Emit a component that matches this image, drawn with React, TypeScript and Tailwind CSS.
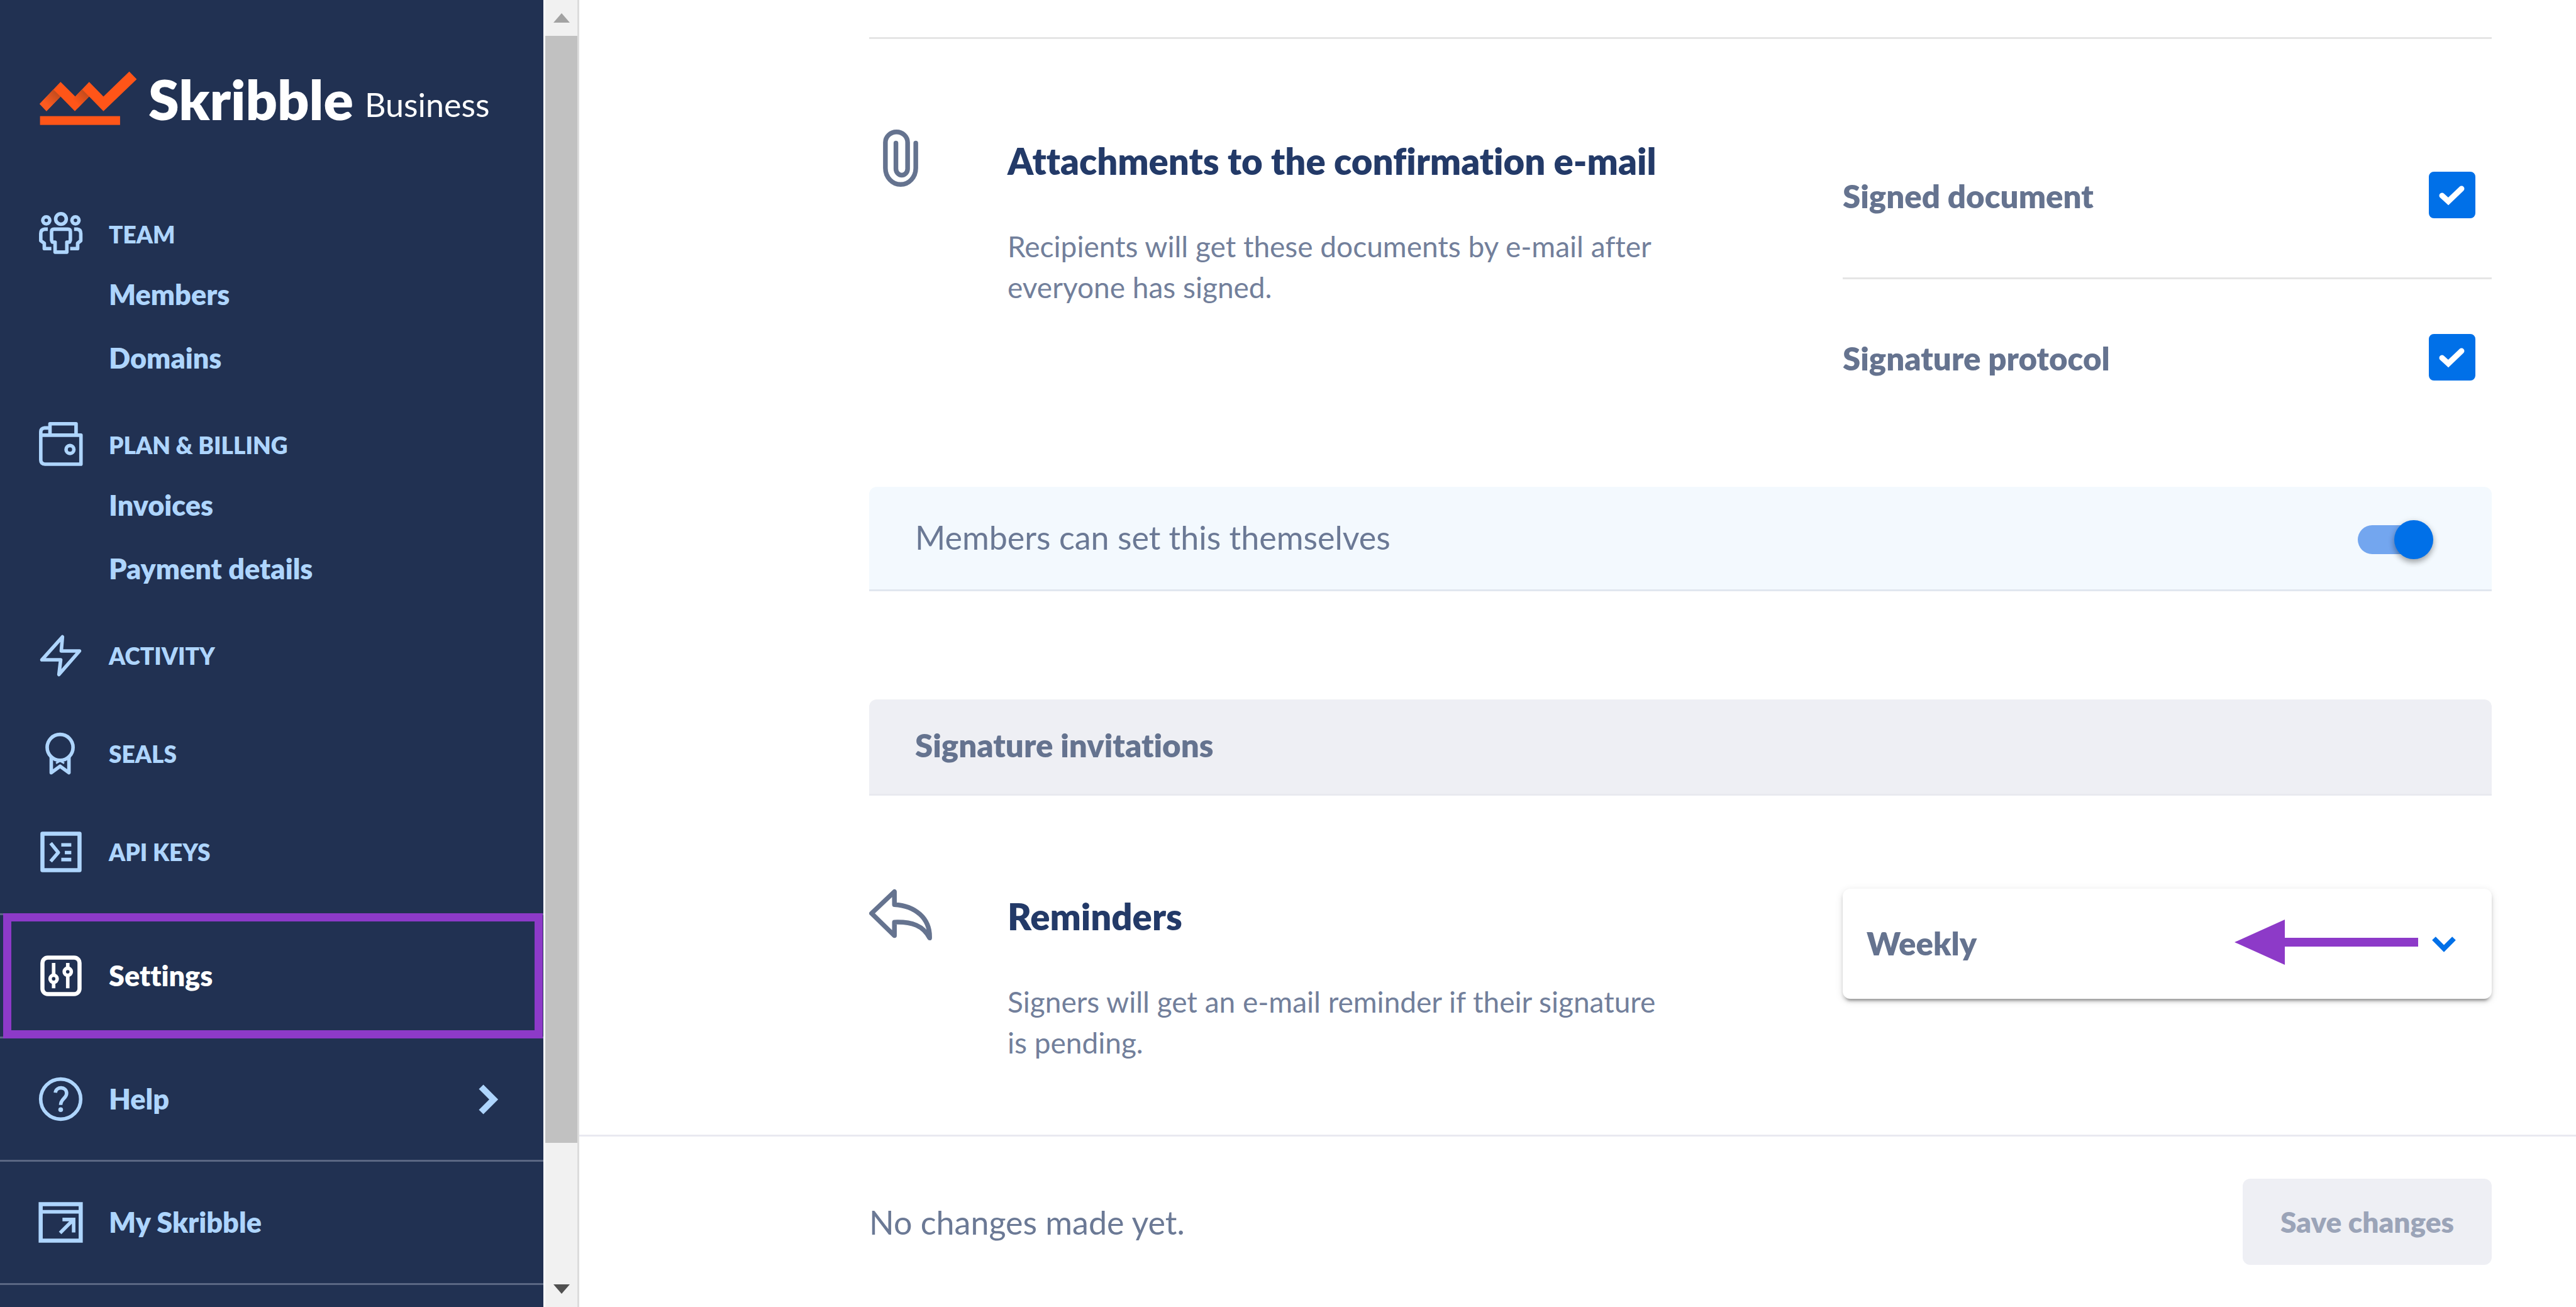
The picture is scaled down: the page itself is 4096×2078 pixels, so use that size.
import React, { useState } from 'react';

type IconProps = { children: React.ReactNode };

function NavIcon({ children }: IconProps) {
  return (
    <svg
      viewBox="0 0 78 78"
      className="size-[73px] shrink-0"
      fill="none"
      stroke="currentColor"
      strokeWidth="6"
      strokeLinejoin="round"
      aria-hidden="true"
    >
      {children}
    </svg>
  );
}

function TeamIcon() {
  return (
    <NavIcon>
      <g transform="translate(2.5 1) scale(0.333) translate(-50 -38)" strokeWidth="18">
        <circle cx="86" cy="81" r="18" />
        <circle cx="161" cy="74" r="27" />
        <circle cx="235" cy="81" r="18" />
        <path d="M125 126H197Q209 126 209 138V182L205 192H191V243H131V192H117L113 182V138Q113 126 125 126Z" />
        <path d="M94 126H78Q58 128 58 148V185L76 198V225H112" />
        <path d="M228 126H244Q262 128 262 148V185L246 198V225H208" />
      </g>
    </NavIcon>
  );
}

function WalletIcon() {
  return (
    <NavIcon>
      <g transform="translate(2.5 0) scale(0.333) translate(-50 -58)" strokeWidth="18">
        <path d="M58 125H263V273H80Q58 271 58 251V108Q58 90 78 88H105" />
        <path d="M105 125V67H238V125" />
        <circle cx="207" cy="198" r="20" />
      </g>
    </NavIcon>
  );
}

function ActivityIcon() {
  return (
    <NavIcon>
      <path d="M42 7L40 31H71L36 71L39 46H7Z" />
    </NavIcon>
  );
}

function SealIcon() {
  return (
    <NavIcon>
      <circle cx="38" cy="28" r="22" />
      <path d="M23 44V71L38 60L53 71V44" />
      <path d="M31 55L38 51L45 55" strokeWidth="3" />
    </NavIcon>
  );
}

function ApiIcon() {
  return (
    <NavIcon>
      <rect x="8" y="8" width="63" height="62" strokeWidth="7" />
      <path d="M22 24L35 40L22 55M40 27H57M46 40H57M40 52H57" />
    </NavIcon>
  );
}

function SettingsIcon() {
  return (
    <NavIcon>
      <rect x="8" y="8" width="63" height="62" rx="9" strokeWidth="7" />
      <path d="M27 17V36M27 51V60M51 17V24M51 39V60" />
      <circle cx="27" cy="44" r="6" />
      <circle cx="51" cy="32" r="6" />
    </NavIcon>
  );
}

function HelpIcon() {
  return (
    <NavIcon>
      <circle cx="39" cy="39" r="34" />
      <path d="M30 28C31 17 49 17 49 29C49 38 39 38 39 49" />
      <circle cx="39" cy="57" r="4" fill="currentColor" stroke="none" />
    </NavIcon>
  );
}

function WindowIcon() {
  return (
    <NavIcon>
      <path d="M5 8H73V70H5Z" strokeWidth="7" strokeLinejoin="miter" />
      <path d="M5 21H73" />
      <path d="M42 34H61V56M61 34L38 57" strokeLinejoin="miter" />
    </NavIcon>
  );
}

function Logo() {
  return (
    <svg viewBox="50 60 498 276" className="h-[86px] w-[155px] shrink-0" aria-hidden="true">
      <defs>
        <linearGradient id="fold-a" gradientUnits="userSpaceOnUse" x1="140" y1="172" x2="85" y2="228">
          <stop offset="0" stopColor="#c24c1e" />
          <stop offset="1" stopColor="#fb5a20" />
        </linearGradient>
        <linearGradient id="fold-b" gradientUnits="userSpaceOnUse" x1="286" y1="172" x2="236" y2="222">
          <stop offset="0" stopColor="#c24c1e" />
          <stop offset="1" stopColor="#ff5518" />
        </linearGradient>
      </defs>
      <path
        fill="#ff5518"
        d="M50 228L157 115L232 190L303 115L376 190L508 62L546 102L376 265L303 190L230 265L157 190L85 265Z"
      />
      <path fill="url(#fold-a)" d="M50 228L120 154L157 190L85 265Z" />
      <path fill="url(#fold-b)" d="M206 214L232 190L267 153L303 190L244 250Z" />
      <rect fill="#ff5518" x="52" y="290" width="409" height="45" />
    </svg>
  );
}

function NavHeading({ icon, children }: { icon: React.ReactNode; children: React.ReactNode }) {
  return (
    <a href="#" className="flex h-[87px] items-center gap-10 text-[37px] font-extrabold">
      {icon}
      {children}
    </a>
  );
}

function SubLink({ children }: { children: React.ReactNode }) {
  return (
    <a href="#" className="flex h-[101px] items-center pt-1 pl-[113px] text-[45px] font-extrabold">
      {children}
    </a>
  );
}

function Sidebar() {
  return (
    <aside className="h-full w-[864px] shrink-0 overflow-hidden bg-[#213152] text-[#aed5fd]">
      <div className="flex items-start gap-[18px] pt-[113px] pl-[63px] text-white">
        <Logo />
        <span className="text-[88px] leading-[88px] font-extrabold">Skribble</span>
        <span className="text-[52px] leading-[106px]">Business</span>
      </div>

      <nav className="mt-[110px] flex flex-col gap-[46px] pl-[60px]">
        <div>
          <NavHeading icon={<TeamIcon />}>TEAM</NavHeading>
          <SubLink>Members</SubLink>
          <SubLink>Domains</SubLink>
        </div>
        <div>
          <NavHeading icon={<WalletIcon />}>PLAN &amp; BILLING</NavHeading>
          <SubLink>Invoices</SubLink>
          <SubLink>Payment details</SubLink>
        </div>
        <div className="flex flex-col gap-[69px]">
          <NavHeading icon={<ActivityIcon />}>ACTIVITY</NavHeading>
          <NavHeading icon={<SealIcon />}>SEALS</NavHeading>
          <NavHeading icon={<ApiIcon />}>API KEYS</NavHeading>
        </div>
      </nav>

      <nav className="mt-[54px] border-b-[3px] border-[#5a6783] text-[45px] font-extrabold">
        <a href="#" className="relative flex h-[196px] items-center gap-10 border-t-[3px] border-[#5a6783] pl-[60px] text-white">
          <SettingsIcon />
          Settings
          <span className="absolute -top-[3px] right-px -bottom-[3px] left-[5px] border-[13px] border-[#8d3ac8]" />
        </a>
        <a href="#" className="flex h-[196px] items-center gap-10 border-t-[3px] border-[#5a6783] pr-[71px] pl-[60px]">
          <HelpIcon />
          <span className="flex-1">Help</span>
          <svg viewBox="0 0 32 48" className="h-12 w-8" fill="none" stroke="currentColor" strokeWidth="10" aria-hidden="true">
            <path d="M4 4L24 24L4 44" />
          </svg>
        </a>
        <a href="#" className="flex h-[196px] items-center gap-10 border-t-[3px] border-[#5a6783] pl-[60px]">
          <WindowIcon />
          My Skribble
        </a>
      </nav>
    </aside>
  );
}

function Scrollbar() {
  return (
    <div className="ml-[3px] flex h-full w-[54px] shrink-0 flex-col border-r-[3px] border-[#dcdcdc] bg-[#f1f1f1]">
      <div className="flex h-[57px] items-center justify-center">
        <svg viewBox="0 0 26 15" className="h-[15px] w-[26px]" aria-hidden="true">
          <path d="M13 0L26 15H0Z" fill="#a2a2a2" />
        </svg>
      </div>
      <div className="flex-1">
        <div className="h-[89.6%] bg-[#c1c1c1]" />
      </div>
      <div className="flex h-[57px] items-center justify-center">
        <svg viewBox="0 0 26 15" className="h-[15px] w-[26px]" aria-hidden="true">
          <path d="M13 15L26 0H0Z" fill="#505050" />
        </svg>
      </div>
    </div>
  );
}

function Checkbox({ id }: { id: string }) {
  const [on, setOn] = useState(true);
  return (
    <span className="relative size-[74px]">
      <input
        id={id}
        type="checkbox"
        checked={on}
        onChange={(e) => setOn(e.target.checked)}
        className="block size-[74px] appearance-none rounded-[8px] border-[5px] border-[#0070e8] checked:bg-[#0070e8]"
      />
      <svg viewBox="0 0 74 74" className="pointer-events-none absolute inset-0" fill="none" stroke="#fff" strokeWidth="9" strokeLinecap="round" aria-hidden="true">
        <path d="M21 38L31 47L52 27" />
      </svg>
    </span>
  );
}

function Toggle({ id }: { id: string }) {
  const [on, setOn] = useState(true);
  return (
    <span className="relative flex h-[62px] w-[120px] items-center">
      <input
        id={id}
        type="checkbox"
        role="switch"
        checked={on}
        onChange={(e) => setOn(e.target.checked)}
        className="h-[46px] w-[112px] appearance-none rounded-full bg-[#73a6ef]"
      />
      <span className="pointer-events-none absolute right-0 size-[62px] rounded-full bg-[#0070e8] shadow-[0_5px_8px_rgba(0,0,0,0.25),0_3px_12px_rgba(0,0,0,0.15)]" />
    </span>
  );
}

function SettingText({ title, children }: { title: string; children: React.ReactNode }) {
  return (
    <div className="max-w-[1060px]">
      <h2 className="text-[58px] leading-[70px] font-extrabold text-[#233a68]">{title}</h2>
      <p className="mt-[68px] text-[46px] leading-[65px] text-[#727f9b]">{children}</p>
    </div>
  );
}

function Main() {
  return (
    <main className="flex h-full min-w-0 flex-1 flex-col">
      <div className="min-h-0 flex-1 overflow-hidden pt-[59px] pr-[134px] pl-[461px]">
        <section className="grid grid-cols-[3fr_2fr] border-t-[3px] border-[#e5e5e5] pt-[144px]">
          <div className="flex gap-[120px]">
            <div className="flex w-[100px] shrink-0 justify-center">
              <svg viewBox="0 0 60 98" className="h-[91px] w-[56px]" fill="none" stroke="#65738f" strokeWidth="8" strokeLinecap="round" aria-hidden="true">
                <path d="M56 23V66A26 28 0 0 1 4 66V22A19 18 0 0 1 42 22V67A10 11 0 0 1 22 67V23" />
              </svg>
            </div>
            <div className="pt-[15px]">
              <SettingText title="Attachments to the confirmation e-mail">
                Recipients will get these documents by e-mail after everyone has signed.
              </SettingText>
            </div>
          </div>
          <div className="pt-[67px] text-[51px] leading-[78px] font-extrabold text-[#65738f]">
            <div className="flex justify-between border-b-[3px] border-[#e5e5e5] pr-[26px] pb-[90px]">
              <label htmlFor="signed-document">Signed document</label>
              <Checkbox id="signed-document" />
            </div>
            <div className="flex justify-between pt-[87px] pr-[26px]">
              <label htmlFor="signature-protocol">Signature protocol</label>
              <Checkbox id="signature-protocol" />
            </div>
          </div>
        </section>

        <div className="mt-[165px] flex h-[166px] items-center justify-between rounded-t-[12px] border-b-[3px] border-[#e1e7ef] bg-[#f3f9fe] pr-[93px] pl-[73px]">
          <label htmlFor="members-can-set" className="pb-1 text-[52px] text-[#6b7995]">
            Members can set this themselves
          </label>
          <div className="pt-1">
            <Toggle id="members-can-set" />
          </div>
        </div>

        <h2 className="mt-[172px] flex h-[153px] items-center rounded-t-[12px] border-b-[3px] border-[#e8e9ef] bg-[#eeeff4] pb-1 pl-[73px] text-[51px] font-extrabold text-[#65738f]">
          Signature invitations
        </h2>

        <section className="mt-[148px] grid grid-cols-[3fr_2fr] items-start">
          <div className="flex gap-[120px]">
            <div className="flex w-[100px] shrink-0 justify-center">
              <svg viewBox="0 0 107 89" className="h-[83px] w-[100px]" fill="none" stroke="#65738f" strokeWidth="8" strokeLinejoin="round" aria-hidden="true">
                <path d="M4 42L43 5V27C78 29 104 50 103 84C92 63 74 56 43 57V80Z" />
              </svg>
            </div>
            <div className="pt-[9px]">
              <SettingText title="Reminders">
                Signers will get an e-mail reminder if their signature is pending.
              </SettingText>
            </div>
          </div>
          <div className="relative">
            <select
              aria-label="Reminders"
              defaultValue="Weekly"
              className="block h-[175px] w-full appearance-none rounded-[12px] bg-white pl-[38px] text-[51px] font-extrabold text-[#65738f] shadow-[0_8px_3px_-5px_rgba(0,0,0,0.2),0_5px_5px_rgba(0,0,0,0.14),0_3px_13px_rgba(0,0,0,0.12)]"
            >
              <option>Weekly</option>
            </select>
            <svg viewBox="0 0 40 28" className="pointer-events-none absolute top-[74px] right-[56px] h-7 w-10" fill="none" stroke="#0070e8" strokeWidth="8" aria-hidden="true">
              <path d="M4 5L20 21L36 5" />
            </svg>
            <svg viewBox="0 0 292 72" className="pointer-events-none absolute top-[49px] right-[117px] h-[72px] w-[292px]" fill="#8d3ac8" aria-hidden="true">
              <path d="M0 36L80 0V29H292V43H80V72Z" />
            </svg>
          </div>
        </section>
      </div>

      <footer className="flex h-[274px] shrink-0 items-center justify-between border-t-[3px] border-[#e9e9f0] pr-[134px] pl-[461px]">
        <p className="text-[52px] text-[#6b7995]">No changes made yet.</p>
        <button type="button" disabled className="h-[137px] w-[396px] rounded-[12px] bg-[#eeeff4] text-[46px] font-extrabold text-[#9ba4b8]">
          Save changes
        </button>
      </footer>
    </main>
  );
}

export default function App() {
  return (
    <div className="flex h-screen overflow-hidden bg-white font-['Lato',sans-serif] [font-variant-ligatures:none]">
      <Sidebar />
      <Scrollbar />
      <Main />
    </div>
  );
}
